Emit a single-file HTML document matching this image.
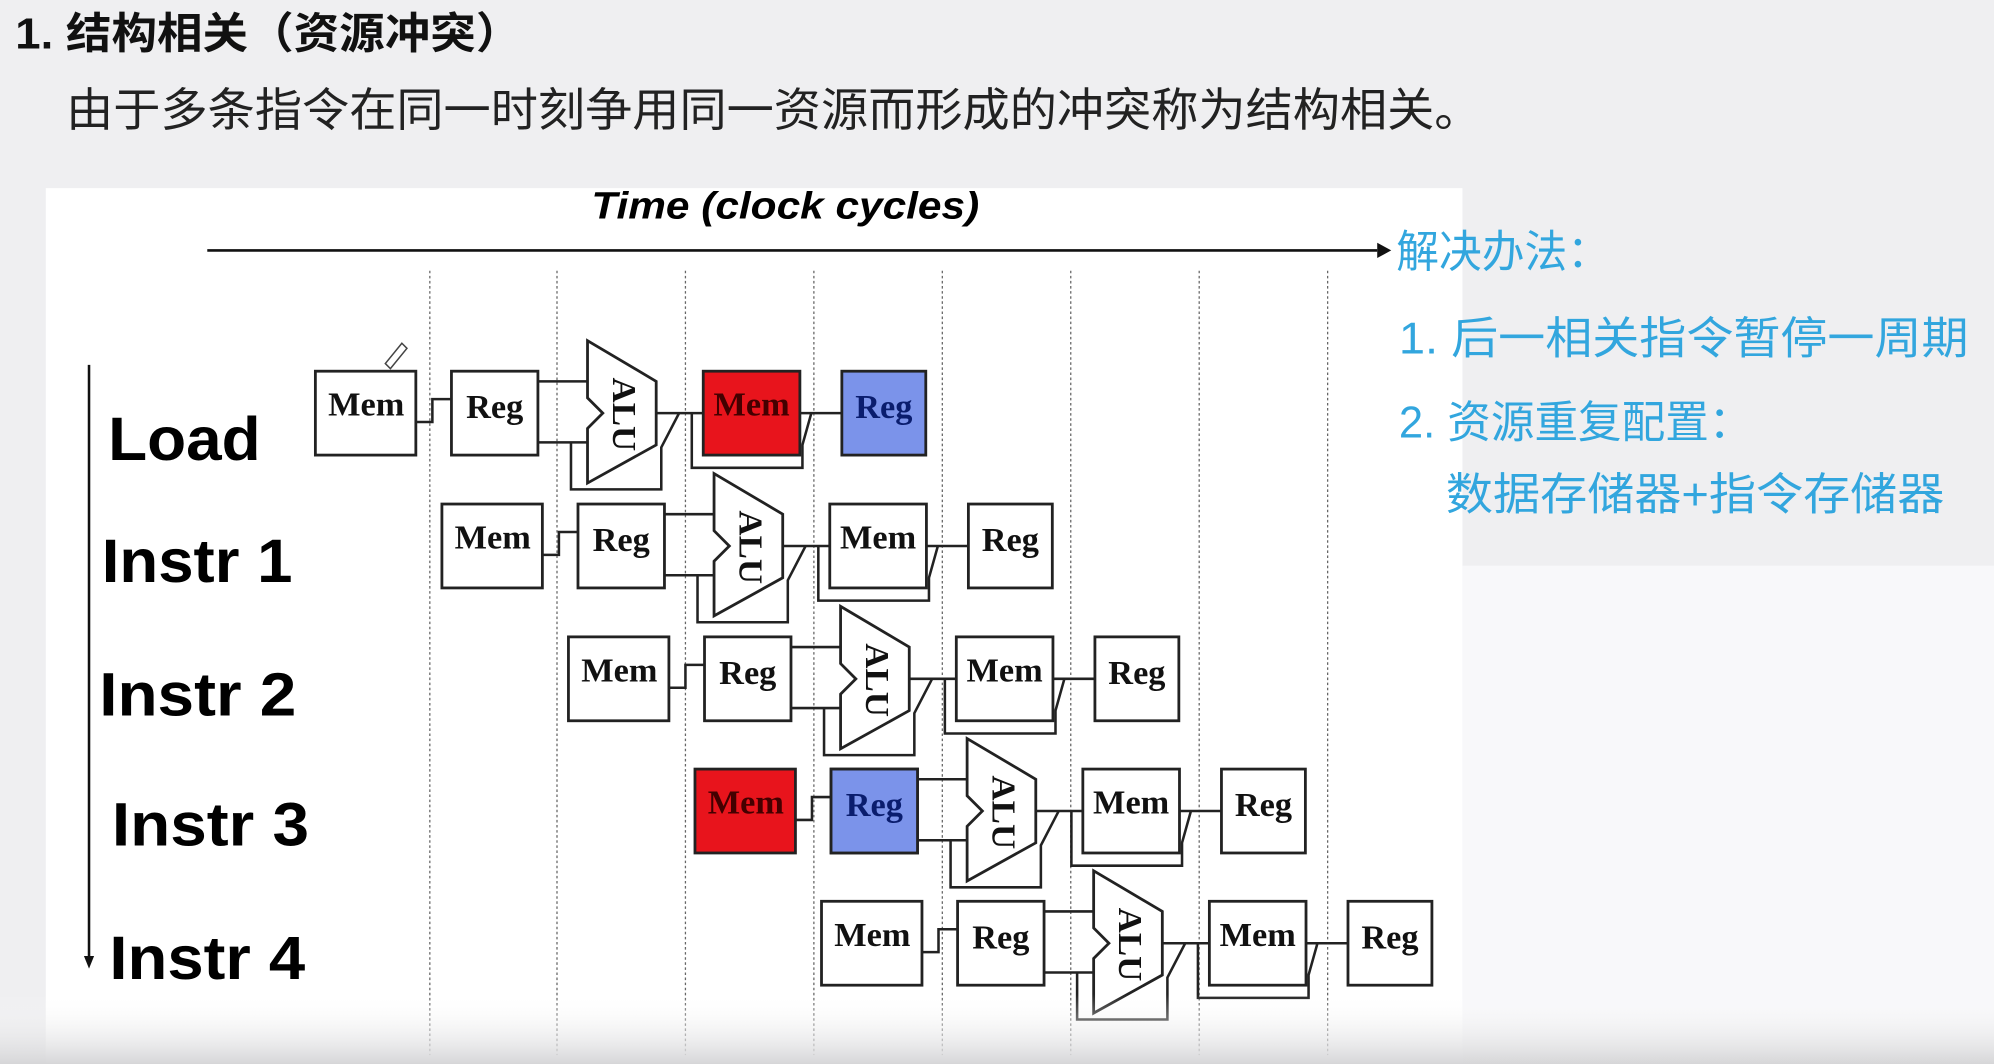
<!DOCTYPE html>
<html><head><meta charset="utf-8"><style>
html,body{margin:0;padding:0;width:1994px;height:1064px;overflow:hidden;background:#efeff1}
svg{display:block}
.box{fill:#fff;stroke:#222;stroke-width:2.2}
.ln{fill:none;stroke:#222;stroke-width:2}
.bt{font-family:"Liberation Serif",serif;font-weight:bold;font-size:27px;fill:#111}
.lab{font-family:"Liberation Sans",sans-serif;font-weight:bold;font-size:48px;fill:#000}
.cn{font-family:"Liberation Sans","Noto Sans CJK SC",sans-serif}
.bl{fill:#32a6de;font-size:35px}
</style></head><body>
<svg width="1994" height="1064" viewBox="0 0 1568 837" preserveAspectRatio="none" xmlns="http://www.w3.org/2000/svg">
<defs>
<linearGradient id="bg" x1="0" y1="0" x2="0" y2="1">
<stop offset="0" stop-color="#ffffff" stop-opacity="0"/>
<stop offset="1" stop-color="#d6d6d8" stop-opacity="1"/>
</linearGradient>
<g id="row">
<path class="ln" d="M79 40H92V22H107"/>
<rect class="box" x="107" y="0" width="68" height="66"/>
<path class="ln" d="M175 8H214M175 56H214"/>
<path class="ln" d="M201 56V93H272V60L286 33"/>
<path class="box" d="M214 -24L268 8V58L214 88V45L226 33L214 21Z"/>
<text class="bt" transform="translate(234,5) rotate(90)" textLength="58" lengthAdjust="spacingAndGlyphs">ALU</text>
<path class="ln" d="M268 33H305"/>
<path class="ln" d="M296 33V76H383V58L390 33M381 33H414"/>
</g>
</defs>
<rect x="0" y="0" width="1568" height="837" fill="#efeff1"/>
<rect x="1150" y="445" width="418" height="392" fill="#f8f8fa"/>
<rect x="36" y="148" width="1114" height="689" fill="#fff"/>
<text x="12" y="38" class="cn" font-size="34" font-weight="bold" fill="#111" textLength="398" lengthAdjust="spacingAndGlyphs">1. 结构相关（资源冲突）</text>
<text x="52" y="99" class="cn" font-size="36" fill="#222" textLength="1113" lengthAdjust="spacingAndGlyphs">由于多条指令在同一时刻争用同一资源而形成的冲突称为结构相关。</text>
<text x="465" y="172" font-family="Liberation Sans,sans-serif" font-style="italic" font-weight="bold" font-size="30" fill="#000" textLength="305" lengthAdjust="spacingAndGlyphs">Time (clock cycles)</text>
<path d="M163 197H1083" stroke="#111" stroke-width="2"/>
<path d="M1083 191L1094 197L1083 203Z" fill="#111"/>
<g stroke="#666" stroke-width="1" stroke-dasharray="2,2">
<path d="M338 213V830M438 213V830M539 213V830M640 213V830M741 213V830M842 213V830M943 213V830M1044 213V830"/>
</g>
<path d="M70 287V752" stroke="#111" stroke-width="2"/>
<path d="M66 752L70 762L74 752Z" fill="#111"/>
<text class="lab" x="85" y="362" textLength="120" lengthAdjust="spacingAndGlyphs">Load</text>
<text class="lab" x="80" y="458" textLength="150" lengthAdjust="spacingAndGlyphs">Instr 1</text>
<text class="lab" x="78" y="563" textLength="155" lengthAdjust="spacingAndGlyphs">Instr 2</text>
<text class="lab" x="88" y="665" textLength="155" lengthAdjust="spacingAndGlyphs">Instr 3</text>
<text class="lab" x="86" y="770" textLength="154" lengthAdjust="spacingAndGlyphs">Instr 4</text>
<!-- row 0 -->
<g transform="translate(248,292)">
<use href="#row"/>
<rect class="box" x="0" y="0" width="79" height="66"/>
<text class="bt" x="40" y="35" text-anchor="middle">Mem</text>
<text class="bt" x="141" y="37" text-anchor="middle">Reg</text>
<rect x="305" y="0" width="76" height="66" fill="#e8141c" stroke="#222" stroke-width="2.2"/>
<text class="bt" x="343" y="35" text-anchor="middle" style="fill:#400">Mem</text>
<rect x="414" y="0" width="66" height="66" fill="#7b93ea" stroke="#222" stroke-width="2.2"/>
<text class="bt" x="447" y="37" text-anchor="middle" style="fill:#0a1d6e">Reg</text>
<path d="M55 -6L68 -22L72 -18L59 -2Z" fill="none" stroke="#444" stroke-width="1.2"/>
</g>
<g transform="translate(347.5,396.5)">
<use href="#row"/>
<rect class="box" x="0" y="0" width="79" height="66"/><text class="bt" x="40" y="35" text-anchor="middle">Mem</text>
<text class="bt" x="141" y="37" text-anchor="middle">Reg</text>
<rect class="box" x="305" y="0" width="76" height="66"/><text class="bt" x="343" y="35" text-anchor="middle">Mem</text>
<rect class="box" x="414" y="0" width="66" height="66"/><text class="bt" x="447" y="37" text-anchor="middle">Reg</text>
</g>
<g transform="translate(447,501)">
<use href="#row"/>
<rect class="box" x="0" y="0" width="79" height="66"/><text class="bt" x="40" y="35" text-anchor="middle">Mem</text>
<text class="bt" x="141" y="37" text-anchor="middle">Reg</text>
<rect class="box" x="305" y="0" width="76" height="66"/><text class="bt" x="343" y="35" text-anchor="middle">Mem</text>
<rect class="box" x="414" y="0" width="66" height="66"/><text class="bt" x="447" y="37" text-anchor="middle">Reg</text>
</g>
<g transform="translate(546.5,605)">
<use href="#row"/>
<rect x="0" y="0" width="79" height="66" fill="#e8141c" stroke="#222" stroke-width="2.2"/><text class="bt" x="40" y="35" text-anchor="middle" style="fill:#400">Mem</text>
<rect x="107" y="0" width="68" height="66" fill="#7b93ea" stroke="#222" stroke-width="2.2"/><text class="bt" x="141" y="37" text-anchor="middle" style="fill:#0a1d6e">Reg</text>
<rect class="box" x="305" y="0" width="76" height="66"/><text class="bt" x="343" y="35" text-anchor="middle">Mem</text>
<rect class="box" x="414" y="0" width="66" height="66"/><text class="bt" x="447" y="37" text-anchor="middle">Reg</text>
</g>
<g transform="translate(646,709)">
<use href="#row"/>
<rect class="box" x="0" y="0" width="79" height="66"/><text class="bt" x="40" y="35" text-anchor="middle">Mem</text>
<text class="bt" x="141" y="37" text-anchor="middle">Reg</text>
<rect class="box" x="305" y="0" width="76" height="66"/><text class="bt" x="343" y="35" text-anchor="middle">Mem</text>
<rect class="box" x="414" y="0" width="66" height="66"/><text class="bt" x="447" y="37" text-anchor="middle">Reg</text>
</g>
<text x="1098" y="210" class="cn bl" textLength="168" lengthAdjust="spacingAndGlyphs">解决办法：</text>
<text x="1100" y="278" class="cn bl" textLength="448" lengthAdjust="spacingAndGlyphs">1. 后一相关指令暂停一周期</text>
<text x="1100" y="344" class="cn bl" textLength="278" lengthAdjust="spacingAndGlyphs">2. 资源重复配置：</text>
<text x="1137" y="401" class="cn bl" textLength="392" lengthAdjust="spacingAndGlyphs">数据存储器+指令存储器</text>
<rect x="0" y="782" width="1568" height="55" fill="url(#bg)"/>
</svg>
</body></html>
